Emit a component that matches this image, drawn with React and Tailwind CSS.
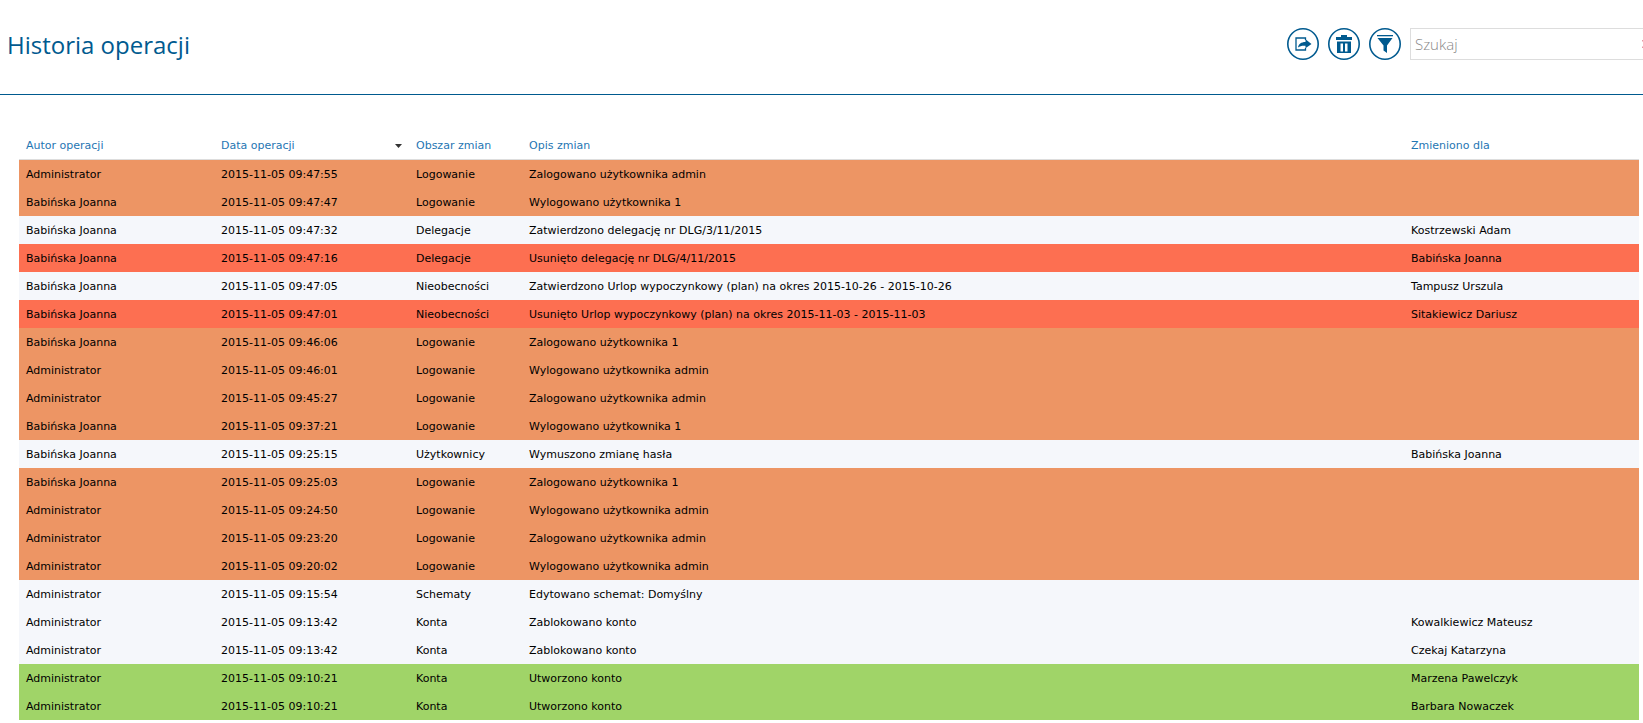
import React, { useState } from 'react';

const columns = [
    { key: 'author', label: 'Autor operacji', width: 'w-[195px]' },
    { key: 'date', label: 'Data operacji', width: 'w-[195px]' },
    { key: 'area', label: 'Obszar zmian', width: 'w-[113px]' },
    { key: 'description', label: 'Opis zmian', width: '' },
    { key: 'changedFor', label: 'Zmieniono dla', width: 'w-[235px]' },
];

const rowColors = {
    login: 'bg-[#ed9564]',
    normal: 'bg-[#f5f7fb]',
    removed: 'bg-[#fd6f51]',
    created: 'bg-[#a0d468]',
};

const operations = [
    { type: 'login', author: 'Administrator', date: '2015-11-05 09:47:55', area: 'Logowanie', description: 'Zalogowano użytkownika admin', changedFor: '' },
    { type: 'login', author: 'Babińska Joanna', date: '2015-11-05 09:47:47', area: 'Logowanie', description: 'Wylogowano użytkownika 1', changedFor: '' },
    { type: 'normal', author: 'Babińska Joanna', date: '2015-11-05 09:47:32', area: 'Delegacje', description: 'Zatwierdzono delegację nr DLG/3/11/2015', changedFor: 'Kostrzewski Adam' },
    { type: 'removed', author: 'Babińska Joanna', date: '2015-11-05 09:47:16', area: 'Delegacje', description: 'Usunięto delegację nr DLG/4/11/2015', changedFor: 'Babińska Joanna' },
    { type: 'normal', author: 'Babińska Joanna', date: '2015-11-05 09:47:05', area: 'Nieobecności', description: 'Zatwierdzono Urlop wypoczynkowy (plan) na okres 2015-10-26 - 2015-10-26', changedFor: 'Tampusz Urszula' },
    { type: 'removed', author: 'Babińska Joanna', date: '2015-11-05 09:47:01', area: 'Nieobecności', description: 'Usunięto Urlop wypoczynkowy (plan) na okres 2015-11-03 - 2015-11-03', changedFor: 'Sitakiewicz Dariusz' },
    { type: 'login', author: 'Babińska Joanna', date: '2015-11-05 09:46:06', area: 'Logowanie', description: 'Zalogowano użytkownika 1', changedFor: '' },
    { type: 'login', author: 'Administrator', date: '2015-11-05 09:46:01', area: 'Logowanie', description: 'Wylogowano użytkownika admin', changedFor: '' },
    { type: 'login', author: 'Administrator', date: '2015-11-05 09:45:27', area: 'Logowanie', description: 'Zalogowano użytkownika admin', changedFor: '' },
    { type: 'login', author: 'Babińska Joanna', date: '2015-11-05 09:37:21', area: 'Logowanie', description: 'Wylogowano użytkownika 1', changedFor: '' },
    { type: 'normal', author: 'Babińska Joanna', date: '2015-11-05 09:25:15', area: 'Użytkownicy', description: 'Wymuszono zmianę hasła', changedFor: 'Babińska Joanna' },
    { type: 'login', author: 'Babińska Joanna', date: '2015-11-05 09:25:03', area: 'Logowanie', description: 'Zalogowano użytkownika 1', changedFor: '' },
    { type: 'login', author: 'Administrator', date: '2015-11-05 09:24:50', area: 'Logowanie', description: 'Wylogowano użytkownika admin', changedFor: '' },
    { type: 'login', author: 'Administrator', date: '2015-11-05 09:23:20', area: 'Logowanie', description: 'Zalogowano użytkownika admin', changedFor: '' },
    { type: 'login', author: 'Administrator', date: '2015-11-05 09:20:02', area: 'Logowanie', description: 'Wylogowano użytkownika admin', changedFor: '' },
    { type: 'normal', author: 'Administrator', date: '2015-11-05 09:15:54', area: 'Schematy', description: 'Edytowano schemat: Domyślny', changedFor: '' },
    { type: 'normal', author: 'Administrator', date: '2015-11-05 09:13:42', area: 'Konta', description: 'Zablokowano konto', changedFor: 'Kowalkiewicz Mateusz' },
    { type: 'normal', author: 'Administrator', date: '2015-11-05 09:13:42', area: 'Konta', description: 'Zablokowano konto', changedFor: 'Czekaj Katarzyna' },
    { type: 'created', author: 'Administrator', date: '2015-11-05 09:10:21', area: 'Konta', description: 'Utworzono konto', changedFor: 'Marzena Pawelczyk' },
    { type: 'created', author: 'Administrator', date: '2015-11-05 09:10:21', area: 'Konta', description: 'Utworzono konto', changedFor: 'Barbara Nowaczek' },
];

const ExportIcon = () => (
    <svg width="32" height="32" viewBox="0 0 32 32" fill="none">
        <circle cx="16" cy="16" r="15.2" stroke="currentColor" strokeWidth="1.6" />
        <path d="M18.5 12v-2H9v12h9.5v-2" stroke="currentColor" strokeWidth="1.3" />
        <path d="M11 19.5c.6-3.6 3-5.4 7.5-5.5v-2.7l6 4.6-6 4.4v-2.6c-3.4-.2-5.4.2-7.5 1.8z" fill="currentColor" />
    </svg>
);

const TrashIcon = () => (
    <svg width="32" height="32" viewBox="0 0 32 32" fill="none">
        <circle cx="16" cy="16" r="15.2" stroke="currentColor" strokeWidth="1.6" />
        <path d="M13 7h6v2h5v3H8V9h5z" fill="currentColor" />
        <path fillRule="evenodd" d="M9 13.500h14V25H9zM12.500 15.500v8H15v-8zM17 15.500v8h2.500v-8z" fill="currentColor" />
    </svg>
);

const FilterIcon = () => (
    <svg width="32" height="32" viewBox="0 0 32 32" fill="none">
        <circle cx="16" cy="16" r="15.2" stroke="currentColor" strokeWidth="1.6" />
        <path d="M8 7h16v1.3H8z" fill="currentColor" />
        <path d="M8.5 10h15L18 17.5V25l-3.5-2.5v-5z" fill="currentColor" />
    </svg>
);

const actions = [
    { label: 'Eksportuj', Icon: ExportIcon },
    { label: 'Usuń', Icon: TrashIcon },
    { label: 'Filtruj', Icon: FilterIcon },
];

function App() {
    const [search, setSearch] = useState('');

    return (
        <div className="bg-white overflow-hidden">
            <header className="flex items-start justify-between border-b border-[#005a8f] pl-[7px] pt-7 h-[95px]">
                <h1 className="text-[24px] leading-[34px] text-[#005a8f] font-['Open_Sans','Noto_Sans',sans-serif]">Historia operacji</h1>

                <div className="flex items-center gap-[9px]">
                    {actions.map(({ label, Icon }) => (
                        <button key={label} type="button" aria-label={label} className="size-8 rounded-full text-[#005a8f] cursor-pointer">
                            <Icon />
                        </button>
                    ))}
                    {/* the search field runs past the right edge of the window */}
                    <div className="flex w-[233px] h-8 overflow-hidden border border-r-0 border-[#dddddd]">
                        <input
                            type="text"
                            aria-label="Szukaj"
                            placeholder="Szukaj"
                            value={search}
                            onChange={(e) => setSearch(e.target.value)}
                            className="w-[231px] shrink-0 px-1 text-[15px] font-light text-gray-700 placeholder:text-[#888888] outline-none font-['Open_Sans','Noto_Sans',sans-serif]"
                        />
                        <button type="button" aria-label="Wyczyść" className="shrink-0 text-[#e59aa5]" onClick={() => setSearch('')}>
                            <svg width="8" height="8" viewBox="0 0 8 8" stroke="currentColor" strokeWidth="1.5">
                                <path d="M0 0l8 8M8 0L0 8" />
                            </svg>
                        </button>
                    </div>
                </div>
            </header>

            <main className="pt-[35px] pl-[19px] pr-1 pb-[3px]">
                <table className="w-full table-fixed border-separate border-spacing-0 text-left text-[11px] leading-4 text-black font-['DejaVu_Sans',sans-serif]">
                    <thead>
                        <tr className="h-[30px]">
                            {columns.map((col) => (
                                <th key={col.key} scope="col" className={`border-b border-[#dddddd] px-[7px] pt-[2px] font-normal text-[#1f76b3] ${col.width}`}>
                                    <div className="flex items-center justify-between">
                                        <span>{col.label}</span>
                                        {col.key === 'date' && (
                                            <svg width="7" height="4" viewBox="0 0 7 4" className="fill-[#333333]">
                                                <path d="M0 0h7L3.5 4z" />
                                            </svg>
                                        )}
                                    </div>
                                </th>
                            ))}
                        </tr>
                    </thead>
                    <tbody>
                        {operations.map((op, index) => (
                            <tr key={index} className={`h-7 ${rowColors[op.type]}`}>
                                {columns.map((col) => (
                                    <td key={col.key} className="px-[7px] pt-[2px] whitespace-nowrap">{op[col.key]}</td>
                                ))}
                            </tr>
                        ))}
                    </tbody>
                </table>
            </main>
        </div>
    );
}

export default App;
